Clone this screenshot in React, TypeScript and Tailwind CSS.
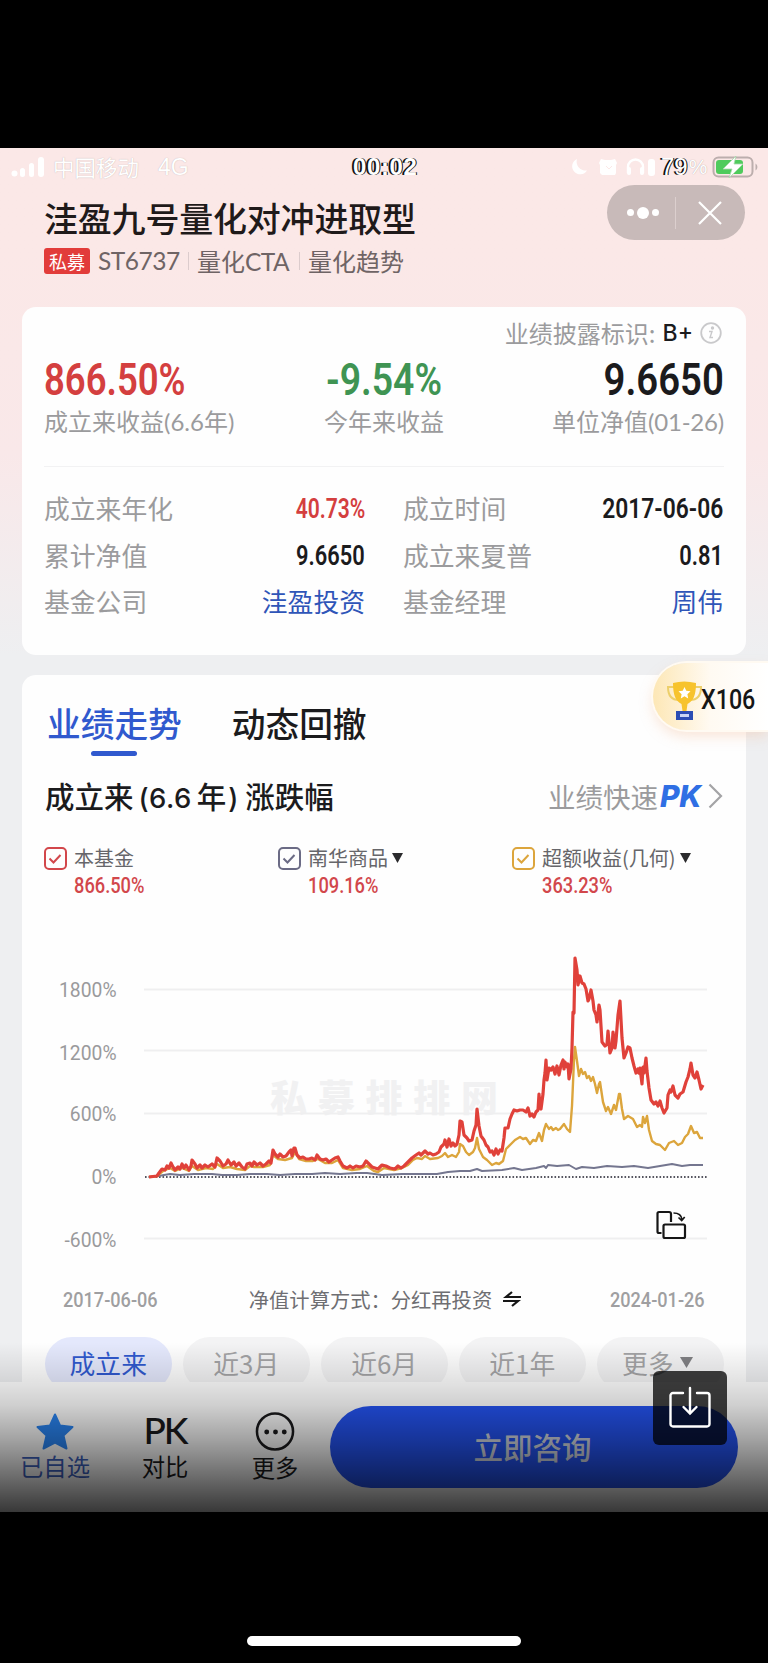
import type { ReactNode } from "react"
import { clsx } from "clsx"

const NUM = "inline-block font-['Roboto'] whitespace-nowrap"

const details = [
  { label: "成立来年化", value: "40.73%", className: "text-[#d43f3f] scale-x-[0.78]", num: true },
  { label: "成立时间", value: "2017-06-06", className: "text-[#1b1b1d] scale-x-[0.845]", num: true },
  { label: "累计净值", value: "9.6650", className: "text-[#1b1b1d] scale-x-[0.81]", num: true },
  { label: "成立来夏普", value: "0.81", className: "text-[#1b1b1d] scale-x-[0.81]", num: true },
  { label: "基金公司", value: "洼盈投资", className: "text-[#2f55b8]", num: false },
  { label: "基金经理", value: "周伟", className: "text-[#2f55b8]", num: false },
]

const legend = [
  { name: "本基金", value: "866.50%", color: "#d2474b", menu: false },
  { name: "南华商品", value: "109.16%", color: "#6b6b85", menu: true },
  { name: "超额收益(几何)", value: "363.23%", color: "#dca53c", menu: true },
]

const periods = ["成立来", "近3月", "近6月", "近1年", "更多"]

const axis = [
  { label: "1800%", y: 59.5, textY: 67 },
  { label: "1200%", y: 120.5, textY: 130 },
  { label: "600%", y: 183.5, textY: 191 },
  { label: "0%", y: 247, textY: 254 },
  { label: "-600%", y: 308.5, textY: 317 },
]

// series points are [x, y] in chart pixels
const fund: [number, number][] = [
  [127, 247], [135, 246], [137, 243], [140, 239], [143, 240], [145, 236], [147, 238], [149, 233], [151, 237], [153, 240],
  [156, 237], [158, 239], [160, 234], [162, 238], [164, 235], [167, 240], [169, 236], [170, 230], [173, 234], [175, 238],
  [178, 235], [180, 238], [183, 235], [186, 237], [190, 234], [193, 237], [195, 228], [198, 231], [201, 236], [204, 234],
  [206, 230], [209, 235], [212, 232], [214, 236], [217, 233], [220, 237], [223, 239], [225, 234], [228, 233], [230, 236],
  [232, 232], [235, 235], [238, 233], [241, 236], [244, 234], [247, 231], [249, 233], [251, 220], [253, 224], [256, 227],
  [258, 224], [261, 227], [264, 226], [267, 222], [269, 220], [270, 226], [272, 218], [273, 218], [275, 225], [278, 228],
  [281, 227], [284, 229], [287, 229], [290, 228], [293, 230], [295, 225], [298, 229], [301, 230], [304, 229], [307, 232],
  [310, 230], [313, 228], [316, 227], [318, 231], [321, 236], [325, 238], [328, 236], [331, 238], [334, 236], [338, 237],
  [341, 236], [344, 231], [347, 234], [350, 237], [353, 238], [356, 239], [360, 235], [364, 236], [368, 238], [373, 239],
  [376, 236], [379, 238], [382, 236], [386, 232], [390, 228], [394, 225], [397, 223], [399, 225], [403, 221], [406, 224],
  [408, 223], [411, 225], [414, 224], [417, 222], [419, 217], [422, 214], [423, 210], [425, 217], [427, 209], [429, 216],
  [431, 213], [433, 216], [435, 214], [437, 205], [438, 191], [440, 192], [442, 205], [445, 208], [447, 211], [450, 210],
  [452, 201], [454, 195], [455, 179], [457, 196], [459, 206], [462, 210], [464, 215], [466, 217], [468, 222], [470, 221],
  [472, 225], [474, 219], [476, 224], [478, 220], [480, 221], [482, 208], [483, 198], [486, 198], [488, 189], [490, 184],
  [492, 180], [495, 181], [498, 180], [501, 180], [504, 182], [506, 178], [508, 186], [510, 184], [512, 187], [514, 182],
  [516, 180], [517, 164], [518, 176], [519, 179], [521, 164], [522, 150], [523, 143], [524, 130], [525, 150], [527, 138],
  [529, 140], [531, 137], [533, 144], [535, 136], [537, 145], [539, 135], [541, 130], [542, 139], [543, 132], [545, 137],
  [546, 134], [547, 149], [549, 139], [550, 118], [551, 82], [552, 83], [553, 28], [555, 40], [556, 55], [558, 46],
  [560, 53], [562, 54], [564, 59], [566, 71], [567, 69], [569, 60], [571, 71], [572, 80], [574, 85], [575, 92],
  [577, 75], [578, 80], [580, 112], [583, 116], [585, 114], [586, 101], [588, 123], [590, 118], [591, 102], [593, 118],
  [594, 111], [596, 85], [598, 71], [600, 108], [602, 128], [604, 123], [606, 117], [608, 118], [610, 128], [612, 136],
  [614, 143], [616, 139], [617, 143], [618, 138], [620, 154], [621, 137], [622, 143], [624, 128], [625, 141], [627, 158],
  [629, 170], [632, 174], [634, 172], [636, 176], [638, 171], [640, 178], [642, 183], [645, 178], [646, 165], [648, 160],
  [649, 162], [651, 156], [653, 165], [656, 168], [658, 164], [661, 162], [664, 152], [666, 147], [668, 139], [669, 133],
  [671, 145], [673, 148], [675, 142], [677, 150], [679, 159], [681, 155],
]

const excess: [number, number][] = [
  [127, 247], [135, 246], [141, 241], [148, 238], [153, 241], [160, 238], [167, 241], [170, 236], [176, 240], [184, 238],
  [191, 239], [195, 234], [201, 238], [208, 237], [215, 239], [223, 240], [228, 236], [232, 237], [241, 237], [248, 235],
  [251, 225], [256, 229], [263, 230], [270, 228], [273, 222], [277, 229], [284, 231], [291, 231], [296, 229], [303, 233],
  [310, 233], [316, 230], [321, 238], [330, 240], [338, 239], [345, 236], [352, 241], [356, 242], [362, 238], [372, 240],
  [380, 238], [386, 235], [391, 230], [395, 228], [400, 229], [403, 226], [408, 229], [416, 228], [420, 226], [423, 223],
  [426, 227], [430, 225], [434, 227], [437, 222], [438, 214], [441, 216], [444, 222], [447, 225], [451, 222], [453, 218],
  [455, 208], [457, 219], [461, 227], [465, 230], [470, 235], [474, 233], [477, 234], [481, 231], [484, 219], [489, 214],
  [493, 210], [498, 207], [501, 209], [504, 208], [508, 214], [511, 210], [514, 211], [517, 203], [520, 211], [522, 200],
  [524, 194], [527, 199], [529, 197], [531, 200], [534, 198], [536, 200], [538, 199], [542, 194], [545, 199], [548, 202],
  [550, 176], [552, 130], [553, 117], [555, 131], [557, 146], [559, 139], [561, 144], [563, 142], [565, 148], [567, 146],
  [569, 151], [571, 147], [573, 154], [575, 163], [577, 154], [578, 152], [581, 172], [584, 181], [586, 177], [589, 184],
  [592, 175], [594, 180], [597, 164], [598, 164], [600, 179], [602, 189], [606, 186], [611, 189], [615, 197], [618, 195],
  [620, 197], [621, 187], [623, 193], [625, 186], [627, 200], [630, 211], [634, 214], [638, 215], [643, 220], [647, 213],
  [652, 211], [656, 215], [660, 213], [663, 207], [666, 204], [669, 196], [672, 203], [675, 202], [678, 208], [681, 208],
]

const index: [number, number][] = [
  [127, 247], [136, 246], [148, 244], [158, 245], [172, 244], [190, 244], [200, 245], [215, 245], [228, 244], [245, 244],
  [258, 245], [273, 244], [290, 244], [303, 243], [318, 244], [335, 243], [345, 243], [360, 245], [380, 244], [400, 244],
  [415, 244], [426, 242], [438, 241], [448, 241], [455, 239], [460, 241], [480, 240], [492, 238], [500, 240], [514, 238],
  [522, 236], [524, 238], [526, 235], [535, 236], [547, 235], [554, 239], [560, 237], [572, 238], [585, 236], [600, 237],
  [612, 236], [626, 238], [638, 236], [650, 234], [660, 236], [668, 235], [681, 235],
]

function toPoints(data: [number, number][]) {
  return data.map((p) => p.join(",")).join(" ")
}

function StatusBar() {
  return (
    <div className="flex h-[38px] items-center pl-[11px] pr-[10px] text-[21.500px] text-white">
      <svg width="34" height="20" viewBox="0 0 34 20" fill="white">
        <circle cx="3.500" cy="16.500" r="3" />
        <rect x="9" y="11" width="5" height="9" rx="2.500" />
        <rect x="18" y="6" width="5" height="14" rx="2.500" />
        <rect x="27" y="0" width="6" height="20" rx="3" />
      </svg>
      <span className="ml-[8px] w-[88px] leading-[30px] whitespace-nowrap [text-shadow:0_0_1px_#b9a9a9]">中国移动</span>
      <span className="ml-[17px] w-[30px] font-['Liberation_Sans'] text-[23px] [text-shadow:0_0_1px_#b9a9a9]">4G</span>
      <span className="ml-[165px] w-[66px] font-['Liberation_Sans'] text-[24px] font-bold tracking-[0.6px] [text-shadow:-2px_0_0_#111,1px_0_0_#111]">
        00:02
      </span>
      <svg className="ml-[151px]" width="86" height="20" viewBox="0 0 86 20">
        <path d="M7 2a8 8 0 1 0 10 11.500A9 9 0 0 1 7 2z" fill="white" />
        <path d="M31 2l4 1h6l4-1 2 4-1 2v8l-1 2H32l-2-2V8l-1-2z" fill="white" />
        <path d="M36 9l3 3 3-3" stroke="#fbe8e7" fill="none" />
        <path d="M60 17v-6a7.500 7.500 0 0 1 15 0v6" transform="translate(-2 -1)" stroke="white" strokeWidth="2.400" fill="none" />
        <rect x="57" y="10" width="4" height="8" rx="2" fill="white" />
        <rect x="70" y="10" width="4" height="8" rx="2" fill="white" />
        <rect x="78" y="2" width="7" height="17" rx="3" fill="white" />
      </svg>
      <span className="ml-[5px] font-['Liberation_Sans'] text-[24px] [text-shadow:-2px_0_0_#111,1px_0_0_#111]">79</span>
      <span className="ml-[1px] font-['Liberation_Sans'] text-[21px] [text-shadow:0_0_1px_#a99999]">%</span>
      <svg className="ml-auto" width="46" height="22" viewBox="0 0 46 22">
        <rect x="1.500" y="1.500" width="39" height="19" rx="5" fill="none" stroke="#bcaead" strokeWidth="2" />
        <rect x="4" y="4" width="27" height="14" rx="3" fill="#4fcb5c" />
        <path d="M43.500 7.500c2.500 1.500 2.500 5.500 0 7z" fill="#bcaead" />
        <path d="M24 0L11 13h9l-3 9 14-14h-9z" fill="white" stroke="#a8d9ab" strokeWidth="0.800" />
      </svg>
    </div>
  )
}

function Header() {
  return (
    <div className="flex h-[121px] justify-between pl-[44px] pr-[23px]">
      <div>
        <h1 className="mt-[8px] h-[48px] text-[34px] leading-[48px] font-medium tracking-[-0.2px] text-[#1f1a1a]">洼盈九号量化对冲进取型</h1>
        <div className="mt-[4px] flex h-[30px] items-center text-[24px] leading-[30px] text-[#6f6465]">
          <span className="flex h-[26px] w-[46px] items-center justify-center rounded-[3px] bg-[#e23c3a] text-[18px] text-white">
            私募
          </span>
          <span className="ml-[8px] w-[80px] font-['Lato'] text-[24.500px] tracking-[-0.5px]">ST6737</span>
          <span className="ml-[10px] h-[18px] w-px bg-[#dccccd]" />
          <span className="ml-[8px] w-[93px] whitespace-nowrap">
            量化<span className="font-['Lato'] text-[24.500px] tracking-[-0.6px]">CTA</span>
          </span>
          <span className="ml-[9px] h-[18px] w-px bg-[#dccccd]" />
          <span className="ml-[8px]">量化趋势</span>
        </div>
      </div>
      <div className="-mt-px flex h-[55px] w-[138px] items-center rounded-full bg-[#c8bab9]">
        <div className="flex w-[68px] items-center justify-center gap-[3px] pl-[3px]">
          <i className="size-[7px] rounded-full bg-white" />
          <i className="size-[12px] rounded-full bg-white" />
          <i className="size-[7px] rounded-full bg-white" />
        </div>
        <div className="h-[32px] w-px bg-[#dccfce]" />
        <svg className="ml-[22px]" width="24" height="24" viewBox="0 0 24 24" stroke="white" strokeWidth="2.200">
          <path d="M1 1l22 22M23 1L1 23" />
        </svg>
      </div>
    </div>
  )
}

function Stat({ children, label, className }: { children: ReactNode; label: ReactNode; className?: string }) {
  return (
    <div className={clsx("flex w-1/3 flex-col", className)}>
      <span className="h-[46px] font-['Roboto'] text-[44.500px] leading-[45px] font-semibold">{children}</span>
      <span className="h-[36px] text-[24px] leading-[34px] whitespace-nowrap text-[#9b9b9d]">{label}</span>
    </div>
  )
}

function SummaryCard() {
  return (
    <section className="mx-[22px] h-[348px] rounded-[14px] bg-[#fefefe] px-[22px] pt-[9px]">
      <div className="flex h-[34px] items-center justify-end pr-[2px] text-[24px] text-[#9b9b9d]">
        业绩披露标识:
        <span className="ml-[7px] font-['Inter'] text-[23px] font-medium text-[#1b1b1d]">B+</span>
        <svg className="ml-[7px]" width="22" height="22" viewBox="0 0 22 22" fill="none" stroke="#c9c9cb" strokeWidth="1.800">
          <circle cx="11" cy="11" r="9.800" />
          <path d="M9 9.500h3l-2 6h3" strokeWidth="1.400" />
          <circle cx="12.500" cy="6" r="0.800" />
        </svg>
      </div>
      <div className="mt-[8px] flex justify-between">
        <Stat className="items-start" label={<>成立来收益<span className="font-['Lato']">(6.6</span>年<span className="font-['Lato']">)</span></>}>
          <span className="inline-block origin-left scale-x-[0.82] text-[#d43f3f]">866.50%</span>
        </Stat>
        <Stat className="items-center" label="今年来收益">
          <span className="inline-block scale-x-[0.84] text-[#3f9453]">-9.54%</span>
        </Stat>
        <Stat className="items-end" label={<>单位净值<span className="font-['Lato'] tracking-[-0.2px]">(01-26)</span></>}>
          <span className="inline-block origin-right scale-x-[0.86] text-[#1b1b1d]">9.6650</span>
        </Stat>
      </div>
      <hr className="mt-[26px] border-[#f2f2f3]" />
      <div className="mt-[18px] grid grid-cols-[321px_320px] gap-x-[38px]">
        {details.map((item) => (
          <div key={item.label} className="flex h-[46.500px] items-center justify-between text-[25.800px] leading-[46px]">
            <span className="text-[#9b9b9d]">{item.label}</span>
            <span className={clsx(item.className, item.num && NUM, item.num && "origin-right pt-[2px] text-[27px] font-semibold")}>
              {item.value}
            </span>
          </div>
        ))}
      </div>
    </section>
  )
}

function Checkbox({ color }: { color: string }) {
  return (
    <svg width="23" height="23" viewBox="0 0 23 23" fill="none" stroke={color} strokeWidth="2">
      <rect x="1" y="1" width="21" height="21" rx="4" />
      <path d="M5.500 11.500l4 4 7-7.500" />
    </svg>
  )
}

function Chart() {
  return (
    <svg className="block" width="723" height="340" viewBox="0 0 723 340">
      <text x="248" y="182" textLength="228" fontSize="37" fontWeight="900" fill="#f1f1f2">
        私募排排网
      </text>
      {axis.map((tick) => (
        <g key={tick.label}>
          <text x="94.500" y={tick.textY} textAnchor="end" fontSize="19.300" fill="#9a9a9c" className="font-['Roboto']">
            {tick.label}
          </text>
          {tick.label === "0%" ? (
            <path d="M123 247H685" stroke="#55555f" strokeWidth="2" strokeDasharray="1.600 1.900" />
          ) : (
            <path d={`M122 ${tick.y}H685`} stroke="#efeff0" strokeWidth="2" />
          )}
        </g>
      ))}
      <g fill="none" strokeLinejoin="round">
        <polyline points={toPoints(index)} stroke="#74768f" strokeWidth="2" />
        <polyline points={toPoints(excess)} stroke="#dca53c" strokeWidth="2.400" />
        <polyline points={toPoints(fund)} stroke="#e0413a" strokeWidth="3.200" />
      </g>
      {/* rotate to landscape */}
      <g fill="none" stroke="#161616" strokeWidth="2.200">
        <path d="M639.500 303h-2.500a1.500 1.500 0 0 1-1.500-1.500v-18a1.500 1.500 0 0 1 1.500-1.500h10a2 2 0 0 1 2 2v8" />
        <rect x="641.500" y="294.500" width="21.500" height="13.500" rx="1.500" />
        <path d="M651.500 283c5 0 8 2.500 8.500 6.500M656.500 287.500l3.200 3 3-3.500" strokeWidth="1.700" />
      </g>
    </svg>
  )
}

function TrendCard() {
  return (
    <section className="mx-[22px] mt-[20px] h-[707px] rounded-t-[14px] bg-[#fefefe]">
      <div className="flex h-[81px] gap-[50px] pl-[25px] text-[33.700px] font-medium text-[#1b1b1d]">
        <div className="flex flex-col items-center text-[#3059ce]">
          <span className="mt-[24px] h-[48px] leading-[48px]">业绩走势</span>
          <span className="mt-[4px] h-[5px] w-[46px] shrink-0 rounded-full bg-[#3059ce]" />
        </div>
        <span className="mt-[24px] leading-[48px]">动态回撤</span>
      </div>
      <div className="mt-[18px] flex h-[44px] items-center justify-between pr-[23px] pl-[23px]">
        <h2 className="flex items-baseline text-[29.500px] leading-[44px] font-medium whitespace-nowrap text-[#1b1b1d]">
          成立来<span className="mx-[5px] font-['Inter'] text-[27.500px] tracking-[0.4px]">(6.6</span>年
          <span className="mr-[7px] ml-[2px] font-['Inter'] text-[27.500px]">)</span>涨跌幅
        </h2>
        <div className="flex items-center text-[27.500px] leading-[44px] text-[#9b9b9d]">
          业绩快速
          <span className="ml-[2px] w-[46px] font-['Inter'] text-[30px] font-extrabold tracking-[-0.3px] text-[#2f6fe4] italic">PK</span>
          <svg className="ml-[2px]" width="15" height="26" viewBox="0 0 15 26" fill="none" stroke="#a4a4a6" strokeWidth="2.200">
            <path d="M1.500 1.500L13 13 1.500 24.500" />
          </svg>
        </div>
      </div>
      <div className="mt-[25px] grid h-[87px] grid-cols-[234px_234px_auto] pl-[22px]">
        {legend.map((item) => (
          <div key={item.name}>
            <div className="flex h-[30px] items-center text-[20px] leading-[30px] text-[#66666a]">
              <Checkbox color={item.color} />
              <span className="ml-[7px] whitespace-nowrap">{item.name}</span>
              {item.menu && (
                <svg className="ml-[4px]" width="11" height="10" viewBox="0 0 11 10" fill="#2b2b2d">
                  <path d="M0 0h11L5.500 10z" />
                </svg>
              )}
            </div>
            <span className={clsx(NUM, "ml-[29.500px] h-[26px] origin-left scale-x-[0.83] text-[22px] leading-[26px] font-medium text-[#d2474b]")}>
              {item.value}
            </span>
          </div>
        ))}
      </div>
      <Chart />
      <div className="mt-[14px] flex h-[30px] items-center justify-between pr-[41px] pl-[41px] text-[20.300px] text-[#6e6e72]">
        <span className="w-[94px] pt-px font-['Roboto'] text-[20px] font-medium text-[#9f9fa1]">
          <span className="inline-block origin-left scale-x-[0.905] whitespace-nowrap">2017-06-06</span>
        </span>
        <span className="ml-[3px] flex items-center">
          净值计算方式：分红再投资
          <svg className="ml-[11px]" width="18" height="16" viewBox="0 0 18 16" fill="none" stroke="#161616" strokeWidth="2.200">
            <path d="M18 6H3L9 1M0 10h15l-6 5" />
          </svg>
        </span>
        <span className="w-[95px] pt-px font-['Roboto'] text-[20px] font-medium text-[#9f9fa1]">
          <span className="inline-block origin-left scale-x-[0.905] whitespace-nowrap">2024-01-26</span>
        </span>
      </div>
      <div className="mt-[23px] flex h-[45px] gap-[10.500px] overflow-hidden pl-[22.500px] text-[25.800px] leading-[52px]">
        {periods.map((name, i) => (
          <div
            key={name}
            className={clsx(
              "flex h-[54px] w-[127.500px] shrink-0 justify-center rounded-full",
              i === 0 ? "bg-[#e4e8fc] text-[#3059ce]" : "bg-[#f3f3f4] text-[#a3a3a5]",
              name === "更多" && "pr-[6px]",
            )}
          >
            {name}
            {name === "更多" && (
              <svg className="mt-[20px] ml-[6px]" width="13" height="11" viewBox="0 0 13 11" fill="#808083">
                <path d="M0 0h13L6.500 11z" />
              </svg>
            )}
          </div>
        ))}
      </div>
    </section>
  )
}

function BottomBar() {
  return (
    <nav className="flex h-[130px] bg-white text-[23.300px] leading-[32px] text-[#1b1b1d]">
      <div className="ml-[15px] flex w-[80px] flex-col items-center pt-[31px] text-[#3d62bf]">
        <svg width="38" height="37" viewBox="0 0 38 37" fill="#2a86f5">
          <path
            d="M19 1.500l5 11 12.500 1.500-9 8.500 3 13-11.500-6-11.500 6 3-13-9-8.500L14 12.500z"
            stroke="#2a86f5"
            strokeWidth="2"
            strokeLinejoin="round"
          />
        </svg>
        <span>已自选</span>
      </div>
      <div className="ml-[30px] flex w-[80px] flex-col items-center pt-[27px]">
        <span className="h-[41px] font-['Lato'] text-[37px] leading-[42px] font-medium tracking-[-2px]">PK</span>
        <span>对比</span>
      </div>
      <div className="ml-[30px] flex w-[80px] flex-col items-center pt-[30px]">
        <svg width="40" height="39" viewBox="0 0 40 40" fill="#1b1b1d">
          <circle cx="20" cy="20" r="18.500" fill="none" stroke="#1b1b1d" strokeWidth="2.600" />
          <circle cx="11.500" cy="20.500" r="2.500" />
          <circle cx="20.500" cy="20.500" r="2.500" />
          <circle cx="29.500" cy="20.500" r="2.500" />
        </svg>
        <span>更多</span>
      </div>
      <button className="mt-[24px] ml-[15px] h-[82px] w-[408px] rounded-full bg-[#2453f2] pr-[3px] pb-[2px] text-[29.500px] font-medium text-[#d3d8e2]">
        立即咨询
      </button>
    </nav>
  )
}

function TrophyBadge() {
  return (
    <div className="absolute top-[515px] right-0 flex h-[67px] w-[115px] items-center rounded-l-full bg-linear-to-r from-[#fde7b5] via-[#fffaf2] via-50% to-white pl-[13px] shadow-[0_6px_14px_rgba(240,180,140,0.35)] ring-2 ring-[#fffaf2]">
      <svg className="mt-[7px] shrink-0" width="37" height="39" viewBox="0 0 37 39">
        <path d="M8 6H2c0 8 3 13 11 13M29 6h6c0 8-3 13-11 13" fill="none" stroke="#edcf6a" strokeWidth="2" />
        <path d="M7 2q11-3 23 0c0 13-3 18-8.500 21l-1 7h-4l-1-7C10 20 7 15 7 2z" fill="#f7c32d" />
        <path d="M18.500 6l1.800 3.800 4.200.5-3.100 2.900.8 4.200-3.700-2.100-3.700 2.100.8-4.200-3.100-2.900 4.200-.5z" fill="white" />
        <rect x="10" y="30" width="17" height="9" fill="#2b4db4" />
        <rect x="14" y="33" width="9" height="3" fill="#c9d5f5" />
      </svg>
      <span className={clsx(NUM, "-ml-[2px] mt-[7px] origin-left scale-x-[0.83] text-[28px] font-medium text-[#161616]")}>X106</span>
    </div>
  )
}

export default function App() {
  return (
    <div className="h-[1663px] w-[768px] overflow-hidden bg-black pt-[148px] font-['Noto_Sans_CJK_SC',sans-serif]">
      <div className="relative h-[1364px] bg-[#eeeff1]">
        <div className="bg-linear-to-b from-[#fbe8e7] from-20% via-[#f9e8e9] via-60% to-[#eeeff1]">
          <StatusBar />
          <Header />
          <SummaryCard />
        </div>
        <TrendCard />
        <BottomBar />
        <TrophyBadge />
        <div className="pointer-events-none absolute inset-x-0 bottom-0 h-[184px] bg-[linear-gradient(to_bottom,rgba(0,0,0,0)_8%,rgba(0,0,0,0.11)_29%,rgba(0,0,0,0.19)_42%,rgba(0,0,0,0.37)_61%,rgba(0,0,0,0.6)_83%,rgba(0,0,0,0.78)_100%)]" />
        <button className="absolute right-[41px] bottom-[67px] flex h-[74px] w-[74px] items-center justify-center rounded-[6px] bg-black/75">
          <svg className="-mt-[3px]" width="42" height="42" viewBox="0 0 42 42" fill="none" stroke="white" strokeWidth="2.400" strokeLinecap="round">
            <path d="M14 7H4a2.500 2.500 0 0 0-2.500 2.500V38A2.500 2.500 0 0 0 4 40.500h34a2.500 2.500 0 0 0 2.500-2.500V9.500A2.500 2.500 0 0 0 38 7H28M21 2v25M14.500 21l6.500 6.500 6.500-6.500" />
          </svg>
        </button>
      </div>
      <div className="mx-auto mt-[124px] h-[10px] w-[274px] rounded-full bg-white" />
    </div>
  )
}
